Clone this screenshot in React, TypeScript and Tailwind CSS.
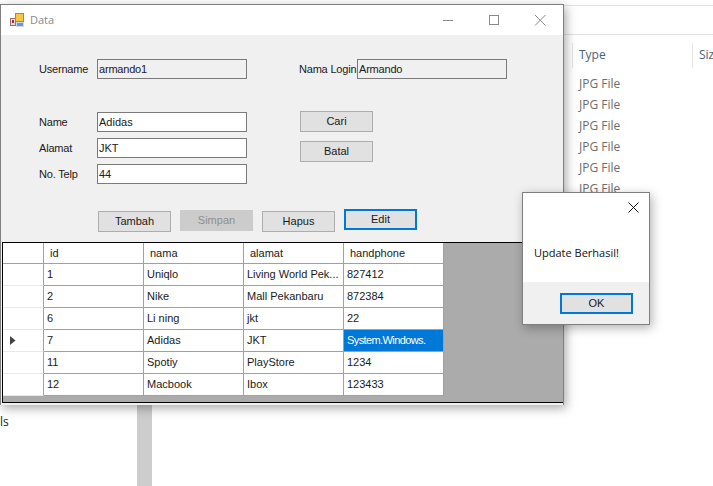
const rows = [
  { id: "1", nama: "Uniqlo", alamat: "Living World Pek...", hp: "827412" },
  { id: "2", nama: "Nike", alamat: "Mall Pekanbaru", hp: "872384" },
  { id: "6", nama: "Li ning", alamat: "jkt", hp: "22" },
  { id: "7", nama: "Adidas", alamat: "JKT", hp: "System.Windows.", current: true },
  { id: "11", nama: "Spotiy", alamat: "PlayStore", hp: "1234" },
  { id: "12", nama: "Macbook", alamat: "Ibox", hp: "123433" },
];

function Field({ label, value, readOnly }: { label: string; value: string; readOnly?: boolean }) {
  return (
    <div className="flex items-center whitespace-nowrap">
      <span className="w-[58px] tracking-[-0.2px]">{label}</span>
      <div
        className={`h-[20px] w-[150px] border border-[#7a7a7a] pl-px leading-[18px] ${
          readOnly ? "bg-[#f0f0f0] tracking-[-0.2px]" : "bg-white"
        }`}
      >
        {value}
      </div>
    </div>
  );
}

const btnStyles = {
  normal: "border border-[#adadad] bg-[#e1e1e1]",
  focused: "border-2 border-[#0078d7] bg-[#e1e1e1]",
  disabled: "border border-[#cccccc] bg-[#cccccc] text-[#8f8f8f]",
};

function Btn({
  label,
  kind = "normal",
  className = "",
}: {
  label: string;
  kind?: "normal" | "focused" | "disabled";
  className?: string;
}) {
  return (
    <div className={`flex h-[21px] w-[73px] items-center justify-center text-[11px] ${btnStyles[kind]} ${className}`}>
      {label}
    </div>
  );
}

function Cell({ text, selected }: { text: string; selected?: boolean }) {
  return (
    <div
      className={`h-[22px] overflow-hidden whitespace-nowrap border-b border-r border-[#a0a0a0] pl-[3px] leading-[21px] ${
        selected ? "bg-[#0078d7] tracking-[-0.6px] text-white" : "bg-white"
      }`}
    >
      {text}
    </div>
  );
}

function DataGrid() {
  return (
    <div className="mb-[2px] ml-px h-[161px] border-y border-l border-black bg-[#ababab]">
      <div className="grid w-[441px] grid-cols-[41px_100px_100px_100px_100px]">
        <div className="h-[21px] border-b border-r border-[#a0a0a0] bg-white" />
        {["id", "nama", "alamat", "handphone"].map((h) => (
          <div
            key={h}
            className="h-[21px] border-b border-r border-[#a0a0a0] bg-white pl-[6px] leading-[20px]"
          >
            {h}
          </div>
        ))}
        {rows.map((r) => (
          <div key={r.id} className="contents">
            <div className="flex h-[22px] items-center border-b border-r border-[#a0a0a0] border-b-[#e8e8e8] bg-white pl-[7px]">
              {r.current && (
                <svg width="6" height="9" viewBox="0 0 6 9">
                  <path d="M0 0 L5.5 4.5 L0 9 Z" fill="#444444" />
                </svg>
              )}
            </div>
            <Cell text={r.id} />
            <Cell text={r.nama} />
            <Cell text={r.alamat} />
            <Cell text={r.hp} selected={r.current} />
          </div>
        ))}
      </div>
    </div>
  );
}

export default function App() {
  return (
    <div className="relative h-[486px] w-[713px] overflow-hidden bg-white font-['Liberation_Sans',sans-serif] text-[11px] text-[#1a1a1a]">
      {/* explorer window behind */}
      <div className="absolute left-[563px] top-[5px] h-px w-[150px] bg-[#e2e2e2]" />
      <div className="absolute left-[563px] top-[34px] h-px w-[150px] bg-[#e2e2e2]" />
      <div className="absolute left-[572px] top-[43px] flex h-[25px] w-[180px] font-['Open_Sans',sans-serif] text-[12px] leading-[24px] text-[#4c607a]">
        <div className="w-[120px] border-l border-[#e5e5e5] pl-[6px]">Type</div>
        <div className="w-[60px] border-l border-[#e5e5e5] pl-[6px]">Size</div>
      </div>
      <div className="absolute left-[579px] top-[73px] flex flex-col font-['Open_Sans',sans-serif] text-[12px] leading-[21px] text-[#6d6d6d]">
        {[0, 1, 2, 3, 4, 5].map((i) => (
          <span key={i}>JPG File</span>
        ))}
      </div>
      <div className="absolute left-[137px] top-[400px] h-[86px] w-[15px] bg-[#cdcdcd]" />
      <div className="absolute left-0 top-[414px] font-['Open_Sans',sans-serif] text-[12px] leading-[16px]">ls</div>

      {/* Data form */}
      <div className="absolute left-0 top-[4px] flex h-[401px] w-[564px] flex-col border border-b-0 border-[#7f7f7f] bg-[#f0f0f0] shadow-[2px_3px_10px_rgba(0,0,0,0.35)]">
        <div className="flex h-[30px] items-center bg-white pl-[9px]">
          <svg width="14" height="14" viewBox="0 0 14 14">
            <rect x="0.5" y="5.5" width="5" height="7" fill="#f3e4e0" stroke="#9a6a6a" />
            <rect x="2" y="7" width="2" height="3" fill="#a52a2a" />
            <rect x="5.5" y="0.5" width="8" height="8" fill="#f6c744" stroke="#a98a3a" />
            <rect x="6.5" y="9.5" width="7" height="4" fill="#6d93d8" stroke="#cfd9ea" />
          </svg>
          <span className="ml-[6px] font-['Open_Sans',sans-serif] text-[11px] text-[#888888]">Data</span>
          <div className="ml-auto flex items-center">
            <svg width="46" height="30" viewBox="0 0 46 30">
              <path d="M18 15.5 H28" stroke="#8a8a8a" />
            </svg>
            <svg width="46" height="30" viewBox="0 0 46 30">
              <rect x="18.5" y="10.5" width="9" height="9" fill="none" stroke="#8a8a8a" />
            </svg>
            <svg width="46" height="30" viewBox="0 0 46 30">
              <path d="M18 10 L28.5 20.5 M28.5 10 L18 20.5" stroke="#8a8a8a" />
            </svg>
          </div>
        </div>

        <div className="flex flex-1 flex-col">
          <div className="ml-[38px] mt-[24px] flex gap-[52px]">
            <Field label="Username" value="armando1" readOnly />
            <Field label="Nama Login" value="Armando" readOnly />
          </div>

          <div className="ml-[38px] mt-[33px] flex gap-[53px]">
            <div className="flex flex-col gap-[6px]">
              <Field label="Name" value="Adidas" />
              <Field label="Alamat" value="JKT" />
              <Field label="No. Telp" value="44" />
            </div>
            <div className="-mt-px flex flex-col gap-[9px]">
              <Btn label="Cari" />
              <Btn label="Batal" />
            </div>
          </div>

          <div className="ml-[97px] mt-[25px] flex items-start gap-[9px]">
            <Btn label="Tambah" className="mt-[2px]" />
            <Btn label="Simpan" kind="disabled" className="mt-px" />
            <Btn label="Hapus" className="mt-[2px]" />
            <Btn label="Edit" kind="focused" />
          </div>

          <div className="mt-auto">
            <DataGrid />
          </div>
        </div>
      </div>

      {/* message box */}
      <div className="absolute left-[522px] top-[192px] flex h-[133px] w-[128px] flex-col border border-[#7f7f7f] bg-white font-['Open_Sans',sans-serif] shadow-[2px_3px_10px_rgba(0,0,0,0.3)]">
        <div className="flex h-[29px] items-center justify-end pr-[10px]">
          <svg width="11" height="11" viewBox="0 0 11 11">
            <path d="M0.5 0.5 L10.5 10.5 M10.5 0.5 L0.5 10.5" stroke="#111111" />
          </svg>
        </div>
        <div className="flex flex-1 items-center pl-[11px] pt-[2px] text-[11px] text-[#111111]">Update Berhasil!</div>
        <div className="flex h-[42px] items-center justify-end bg-[#f0f0f0] pr-[16px]">
          <Btn label="OK" kind="focused" className="font-['Liberation_Sans',sans-serif]" />
        </div>
      </div>
    </div>
  );
}
